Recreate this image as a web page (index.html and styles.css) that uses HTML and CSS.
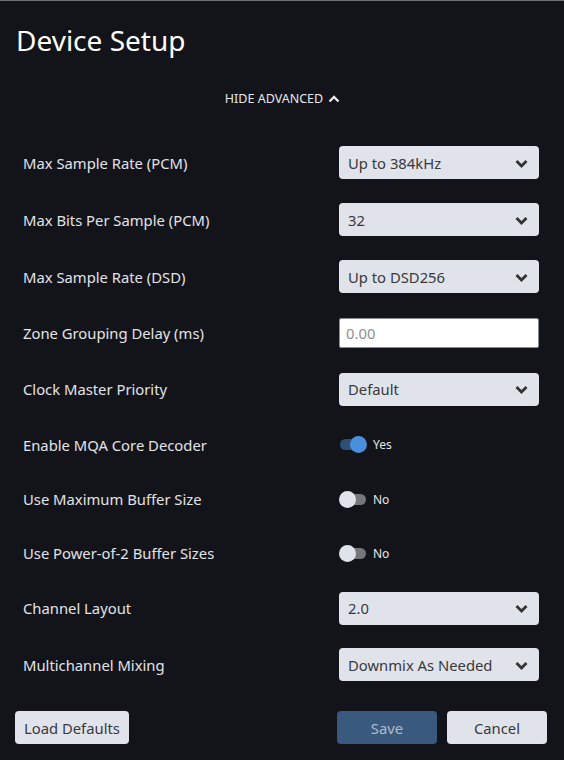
FILE: index.html
```html
<!DOCTYPE html>
<html>
<head>
<meta charset="utf-8">
<link rel="stylesheet" href="styles.css">
</head>
<body>
<div class="dialog">
  <h1 class="title">Device Setup</h1>
  <div class="adv">
    <span>HIDE ADVANCED</span>
    <svg class="adv-icon" width="12" height="10" viewBox="0 0 12 10"><path d="M1.5 7.5 L6 3 L10.5 7.5" fill="none" stroke="#e6e7eb" stroke-width="2.4"/></svg>
  </div>
  <div class="rows">
    <div class="row h57"><span class="label">Max Sample Rate (PCM)</span><div class="select"><span>Up to 384kHz</span><svg class="chev" width="13" height="9" viewBox="0 0 13 9"><path d="M1.5 2 L6.5 7 L11.5 2" fill="none" stroke="#333" stroke-width="2.8"/></svg></div></div>
    <div class="row h57"><span class="label">Max Bits Per Sample (PCM)</span><div class="select"><span>32</span><svg class="chev" width="13" height="9" viewBox="0 0 13 9"><path d="M1.5 2 L6.5 7 L11.5 2" fill="none" stroke="#333" stroke-width="2.8"/></svg></div></div>
    <div class="row h57"><span class="label">Max Sample Rate (DSD)</span><div class="select"><span>Up to DSD256</span><svg class="chev" width="13" height="9" viewBox="0 0 13 9"><path d="M1.5 2 L6.5 7 L11.5 2" fill="none" stroke="#333" stroke-width="2.8"/></svg></div></div>
    <div class="row h56"><span class="label">Zone Grouping Delay (ms)</span><div class="input">0.00</div></div>
    <div class="row h56"><span class="label">Clock Master Priority</span><div class="select"><span>Default</span><svg class="chev" width="13" height="9" viewBox="0 0 13 9"><path d="M1.5 2 L6.5 7 L11.5 2" fill="none" stroke="#333" stroke-width="2.8"/></svg></div></div>
    <div class="row h55"><span class="label">Enable MQA Core Decoder</span><div class="toggle on"><span class="track"><span class="thumb"></span></span><span class="tlabel">Yes</span></div></div>
    <div class="row h54"><span class="label">Use Maximum Buffer Size</span><div class="toggle"><span class="track"><span class="thumb"></span></span><span class="tlabel">No</span></div></div>
    <div class="row h54"><span class="label">Use Power-of-2 Buffer Sizes</span><div class="toggle"><span class="track"><span class="thumb"></span></span><span class="tlabel">No</span></div></div>
    <div class="row h56"><span class="label">Channel Layout</span><div class="select"><span>2.0</span><svg class="chev" width="13" height="9" viewBox="0 0 13 9"><path d="M1.5 2 L6.5 7 L11.5 2" fill="none" stroke="#333" stroke-width="2.8"/></svg></div></div>
    <div class="row h57"><span class="label">Multichannel Mixing</span><div class="select"><span>Downmix As Needed</span><svg class="chev" width="13" height="9" viewBox="0 0 13 9"><path d="M1.5 2 L6.5 7 L11.5 2" fill="none" stroke="#333" stroke-width="2.8"/></svg></div></div>
  </div>
  <div class="footer">
    <button class="btn light">Load Defaults</button>
    <div class="right">
      <button class="btn save">Save</button>
      <button class="btn light wide">Cancel</button>
    </div>
  </div>
</div>
</body>
</html>
```
FILE: styles.css
```css
* { box-sizing: border-box; }
html, body { margin: 0; padding: 0; }
body {
  background: #131419;
  font-family: "Noto Sans", "Open Sans", sans-serif;
  color: #e2e3e7;
  width: 564px;
  height: 760px;
  overflow: hidden;
}
.dialog {
  border-top: 1px solid #6e7076;
  height: 760px;
}
.title {
  margin: 0;
  padding: 20px 0 0 16px;
  font-size: 28px;
  font-weight: 400;
  line-height: 38px;
  color: #ffffff;
}
.adv {
  display: flex;
  justify-content: center;
  align-items: center;
  gap: 5px;
  margin-top: 32px;
  font-size: 12.5px;
  line-height: 16px;
  color: #e6e7eb;
  padding-left: 1px;
}
.adv-icon { margin-top: -1px; }
.rows {
  margin-top: 27px;
  padding: 0 25px 0 23px;
}
.row {
  display: flex;
  align-items: center;
  justify-content: space-between;
}
.h57 { height: 57px; }
.h56 { height: 56px; }
.h55 { height: 55px; }
.h54 { height: 54px; }
.label {
  font-size: 14.8px;
  color: #e2e3e7;
}
.select {
  width: 200px;
  height: 33px;
  background: #e1e3ea;
  border-radius: 4px;
  display: flex;
  align-items: center;
  justify-content: space-between;
  padding: 0 11px 0 9px;
  font-size: 14.8px;
  color: #38393d;
}
.chev { margin-top: 1px; }
.input {
  width: 200px;
  height: 30px;
  background: #ffffff;
  border: 1px solid #8a8c92;
  border-radius: 2px;
  display: flex;
  align-items: center;
  padding-left: 6px;
  font-size: 14.8px;
  color: #8f9094;
}
.toggle {
  width: 200px;
  display: flex;
  align-items: center;
  gap: 7px;
}
.track {
  position: relative;
  width: 26px;
  height: 11px;
  border-radius: 6px;
  background: #75767a;
  margin-left: 1px;
}
.thumb {
  position: absolute;
  top: -3px;
  left: -1px;
  width: 17px;
  height: 17px;
  border-radius: 50%;
  background: #e1e3ea;
}
.toggle.on .track { background: #2f4f75; }
.toggle.on .thumb { left: 10px; background: #4a8fdc; }
.tlabel {
  font-size: 12px;
  color: #e6e7eb;
}
.footer {
  display: flex;
  justify-content: space-between;
  padding: 0 17px 0 15px;
  margin-top: 18px;
}
.right { display: flex; gap: 10px; }
.btn {
  height: 33px;
  border: none;
  border-radius: 4px;
  font-family: "Noto Sans", "Open Sans", sans-serif;
  font-size: 14.8px;
  padding: 0 9px;
}
.btn.light { background: #e1e3ea; color: #38393d; }
.btn.wide { width: 100px; }
.btn.save { width: 100px; background: #395a7e; color: #b0bccb; }
```
